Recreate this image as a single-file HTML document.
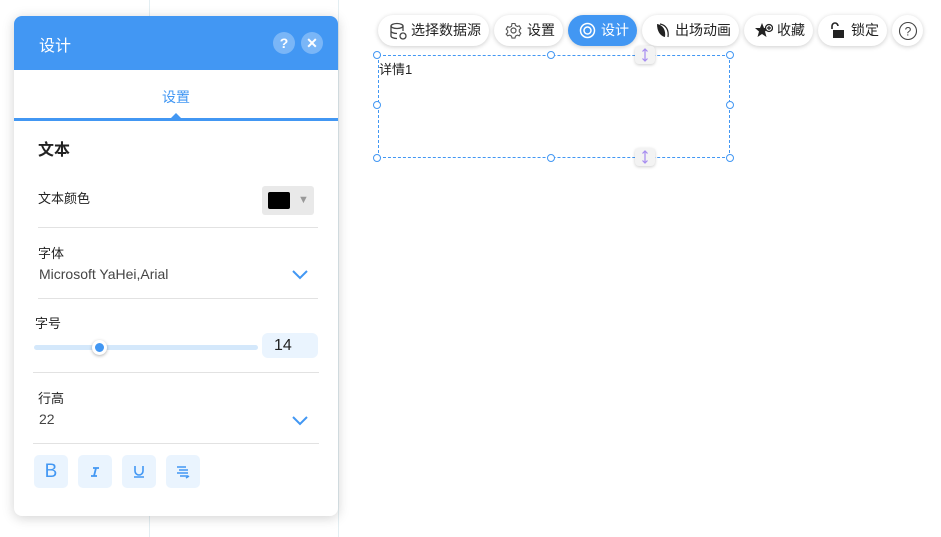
<!DOCTYPE html>
<html><head><meta charset="utf-8"><style>
*{box-sizing:border-box;margin:0;padding:0}
body{width:941px;height:537px;background:#fff;font-family:"Liberation Sans","Noto Sans CJK SC",sans-serif;position:relative;overflow:hidden;color:#222}
.vl{position:absolute;top:0;width:1px;height:537px;background:#e3eef2}
.panel{position:absolute;left:14px;top:16px;width:324px;height:500px;background:#fff;border-radius:8px;box-shadow:0 2px 12px rgba(0,0,0,.18);overflow:hidden}
.hd{height:54px;background:#4297f3;color:#fff;font-size:16px;padding:16px 25px}
.hb{position:absolute;top:16px;width:22px;height:22px;border-radius:50%;background:#7ab6f7;color:#fff;font-size:14px;text-align:center;line-height:22px;font-weight:bold}
.tab{height:51px;border-bottom:3px solid #4297f3;text-align:center;color:#4297f3;font-size:14px;padding-top:17px;position:relative}
.tab:after{content:"";position:absolute;left:157px;bottom:0;border:5px solid transparent;border-bottom-color:#4297f3;border-top:0}
.ab{position:absolute;font-size:14px}
.hr{position:absolute;height:1px;background:#e2e2e2}
.btn{position:absolute;top:15px;height:31px;border-radius:16px;background:#fff;box-shadow:0 1px 5px rgba(0,0,0,.2);font-size:14px;line-height:31px;padding-left:33px;color:#222}
.btn svg{position:absolute;left:11px;top:7px}
.fb{position:absolute;top:455px;width:34px;height:33px;border-radius:5px;background:#eaf4fe;color:#4297f3;text-align:center;line-height:33px}
.h{position:absolute;width:8px;height:8px;border:1px solid #4297f3;border-radius:50%;background:#fff}
.dh{position:absolute;left:635px;width:20px;height:18px;border-radius:4px;background:#f3f3f3;box-shadow:0 1px 3px rgba(0,0,0,.2)}
</style></head><body>
<div class="vl" style="left:149px"></div><div class="vl" style="left:338px"></div>
<div class="panel">
<div class="hd">设计</div>
<div class="hb" style="left:259px">?</div><div class="hb" style="left:287px">✕</div>
<div class="tab">设置</div>
<div class="ab" style="left:24px;top:120px;font-size:16px;font-weight:bold">文本</div>
<div class="ab" style="left:24px;top:172px;font-size:13px">文本颜色</div>
<div class="ab" style="left:248px;top:170px;width:52px;height:29px;background:#e9e9e9;border-radius:3px"><div style="position:absolute;left:6px;top:6px;width:22px;height:17px;background:#000;border-radius:2px"></div><div style="position:absolute;left:36px;top:8px;color:#999;font-size:11px">▼</div></div>
<div class="hr" style="left:24px;top:211px;width:280px"></div>
<div class="ab" style="left:24px;top:227px;font-size:13px">字体</div>
<div class="ab" style="left:25px;top:250px;color:#444">Microsoft YaHei,Arial</div>
<svg class="ab" style="left:278px;top:254px" width="16" height="10"><path d="M1 1l7 7 7-7" stroke="#4297f3" stroke-width="2" fill="none"/></svg>
<div class="hr" style="left:24px;top:282px;width:280px"></div>
<div class="ab" style="left:21px;top:297px;font-size:13px">字号</div>
<div class="ab" style="left:20px;top:329px;width:224px;height:5px;background:#d4e8fb;border-radius:3px"></div>
<div class="ab" style="left:78px;top:324px;width:15px;height:15px;border-radius:50%;background:#4297f3;border:3px solid #fff;box-shadow:0 1px 3px rgba(0,0,0,.3)"></div>
<div class="ab" style="left:248px;top:317px;width:56px;height:25px;background:#eaf4fe;border-radius:6px;font-size:16px;padding:4px 0 0 12px;color:#222">14</div>
<div class="hr" style="left:19px;top:356px;width:286px"></div>
<div class="ab" style="left:24px;top:372px;font-size:13px">行高</div>
<div class="ab" style="left:25px;top:395px;color:#444">22</div>
<svg class="ab" style="left:278px;top:400px" width="16" height="10"><path d="M1 1l7 7 7-7" stroke="#4297f3" stroke-width="2" fill="none"/></svg>
<div class="hr" style="left:19px;top:427px;width:286px"></div>
</div>
<div class="fb" style="left:34px;font-size:19px">B</div>
<div class="fb" style="left:78px"><svg width="34" height="33"><path d="M15 13h6M13 21h6M18 13l-2 8" stroke="#4297f3" stroke-width="1.8" fill="none"/></svg></div>
<div class="fb" style="left:122px"><svg width="34" height="33"><path d="M13 11v5a4 4 0 0 0 8 0v-5M12 22h10" stroke="#4297f3" stroke-width="1.6" fill="none"/></svg></div>
<div class="fb" style="left:166px"><svg width="34" height="33"><path d="M11 12h9M13 15h9M11 18h11M14 21h8" stroke="#4297f3" stroke-width="1.6" fill="none"/><path d="M20 23l3-2" stroke="#4297f3" stroke-width="1.6"/></svg></div>

<div class="btn" style="left:378px;width:111px"><svg width="18" height="18"><ellipse cx="8" cy="4" rx="6" ry="2.5" fill="none" stroke="#444" stroke-width="1.3"/><path d="M2 4v10c0 1.4 2.7 2.5 6 2.5M14 4v5M2 9c0 1.4 2.7 2.5 6 2.5" fill="none" stroke="#444" stroke-width="1.3"/><circle cx="14" cy="14" r="3" fill="none" stroke="#444" stroke-width="1.3"/></svg>选择数据源</div>
<div class="btn" style="left:494px;width:69px"><svg width="17" height="17"><circle cx="8.5" cy="8.5" r="2.5" fill="none" stroke="#555" stroke-width="1.2"/><path d="M7 1.5h3l.5 2 1.8 1 2-.7 1.5 2.6-1.5 1.4v2l1.5 1.4-1.5 2.6-2-.7-1.8 1-.5 2H7l-.5-2-1.8-1-2 .7L1.2 12l1.5-1.4v-2L1.2 7.2l1.5-2.6 2 .7 1.8-1z" fill="none" stroke="#555" stroke-width="1.1"/></svg>设置</div>
<div class="btn" style="left:568px;width:69px;background:#4297f3;color:#fff"><svg width="17" height="17"><circle cx="8.5" cy="8.5" r="7" fill="none" stroke="#fff" stroke-width="1.5"/><circle cx="8.5" cy="8.5" r="3.5" fill="none" stroke="#fff" stroke-width="1.5"/></svg>设计</div>
<div class="btn" style="left:642px;width:97px"><svg width="17" height="17"><path d="M4 2c6 1 9 6 8 13-5-1-8-6-8-13z" fill="#222"/><path d="M7 2c6 1 9 6 8 13" fill="none" stroke="#222" stroke-width="1.2"/></svg>出场动画</div>
<div class="btn" style="left:744px;width:69px"><svg width="18" height="17"><path d="M7 1l2 5h5l-4 3.5 1.5 5.5L7 12l-4.5 3L4 9.5 0 6h5z" fill="#222"/><circle cx="14" cy="6" r="3.5" fill="#fff" stroke="#222" stroke-width="1.3"/><path d="M14 4v4M12 6h4" stroke="#222" stroke-width="1.2"/></svg>收藏</div>
<div class="btn" style="left:818px;width:69px"><svg width="17" height="17"><path d="M3 7V4a3 3 0 0 1 6 0" fill="none" stroke="#222" stroke-width="1.6"/><rect x="4" y="8" width="11" height="8" fill="#222"/></svg>锁定</div>
<div class="btn" style="left:892px;width:31px;padding:0"><svg width="20" height="20" style="left:6px;top:6px"><circle cx="10" cy="10" r="8.5" fill="none" stroke="#444" stroke-width="1.1"/><text x="10" y="14.5" font-size="12" text-anchor="middle" fill="#444" font-family="Liberation Sans">?</text></svg></div>

<div style="position:absolute;left:378px;top:55px;width:352px;height:103px;border:1px dashed #4297f3"></div>
<div style="position:absolute;left:379px;top:59px;font-size:13px;color:#222">详情1</div>
<div class="h" style="left:373px;top:51px"></div><div class="h" style="left:547px;top:51px"></div><div class="h" style="left:726px;top:51px"></div>
<div class="h" style="left:373px;top:101px"></div><div class="h" style="left:726px;top:101px"></div>
<div class="h" style="left:373px;top:154px"></div><div class="h" style="left:547px;top:154px"></div><div class="h" style="left:726px;top:154px"></div>
<div class="dh" style="top:46px"><svg width="20" height="18"><path d="M10 3v12M7.5 5.5L10 3l2.5 2.5M7.5 12.5L10 15l2.5-2.5" fill="none" stroke="#a58bf0" stroke-width="1.2"/></svg></div>
<div class="dh" style="top:148px"><svg width="20" height="18"><path d="M10 3v12M7.5 5.5L10 3l2.5 2.5M7.5 12.5L10 15l2.5-2.5" fill="none" stroke="#a58bf0" stroke-width="1.2"/></svg></div>
</body></html>
